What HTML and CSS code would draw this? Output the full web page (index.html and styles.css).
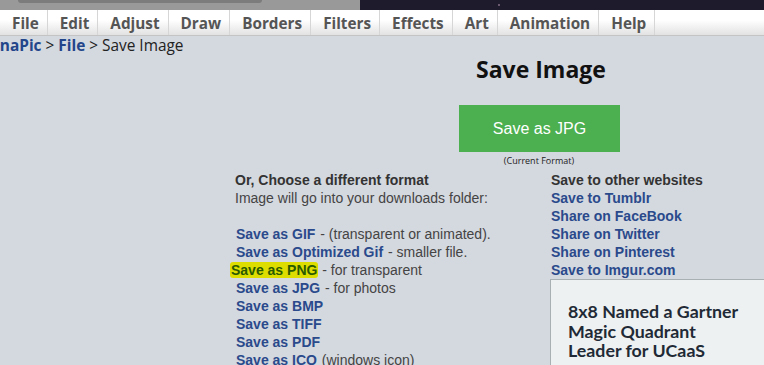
FILE: index.html
```html
<!DOCTYPE html>
<html>
<head>
<meta charset="utf-8">
<link rel="stylesheet" href="styles.css">
</head>
<body>
<div class="topstrip">
  <div class="tabzone"><div class="tabbar"></div></div>
  <div class="darkzone"><span class="dot"></span></div>
</div>
<nav class="menubar">
  <span class="mi">File</span><span class="mi">Edit</span><span class="mi">Adjust</span><span class="mi">Draw</span><span class="mi">Borders</span><span class="mi">Filters</span><span class="mi">Effects</span><span class="mi">Art</span><span class="mi">Animation</span><span class="mi">Help</span>
</nav>
<div class="crumbs"><a class="cl">LunaPic</a> &gt; <a class="cl">File</a> &gt; Save Image</div>
<main class="content">
  <h1 class="title">Save Image</h1>
  <div class="btnwrap"><span class="btn">Save as JPG</span></div>
  <div class="cur">(Current Format)</div>
  <div class="cols">
    <div class="col1">
      <div class="hd">Or, Choose a different format</div>
      <div class="tx">Image will go into your downloads folder:</div>
      <div class="gap"></div>
      <div class="ln"><a class="lk">Save as GIF</a> - (transparent or animated).</div>
      <div class="ln"><a class="lk">Save as Optimized Gif</a> - smaller file.</div>
      <div class="ln"><a class="lk hl">Save as PNG</a> - for transparent</div>
      <div class="ln"><a class="lk">Save as JPG</a> - for photos</div>
      <div class="ln"><a class="lk">Save as BMP</a></div>
      <div class="ln"><a class="lk">Save as TIFF</a></div>
      <div class="ln"><a class="lk">Save as PDF</a></div>
      <div class="ln"><a class="lk">Save as ICO</a> (windows icon)</div>
    </div>
    <div class="col2">
      <div class="hd">Save to other websites</div>
      <div class="ln"><a class="lk">Save to Tumblr</a></div>
      <div class="ln"><a class="lk">Share on FaceBook</a></div>
      <div class="ln"><a class="lk">Share on Twitter</a></div>
      <div class="ln"><a class="lk">Share on Pinterest</a></div>
      <div class="ln"><a class="lk">Save to Imgur.com</a></div>
      <div class="ad">
        <div class="adtext">8x8 Named a Gartner Magic Quadrant Leader for UCaaS</div>
      </div>
    </div>
  </div>
</main>
</body>
</html>
```
FILE: styles.css
```css
html, body {
  margin: 0;
  padding: 0;
}
body {
  width: 764px;
  height: 365px;
  overflow: hidden;
  background: #d4d8df;
  font-family: "Liberation Sans", Arial, sans-serif;
}
.topstrip {
  display: flex;
  height: 10px;
}
.tabzone {
  width: 360px;
  background: #999999;
}
.tabbar {
  margin-left: 18px;
  width: 244px;
  height: 3px;
  background: #7c7c7c;
  border-radius: 0 0 4px 4px;
}
.darkzone {
  flex: 1;
  background: #1e1b2c;
  position: relative;
}
.dot {
  position: absolute;
  left: 138px;
  top: 4px;
  width: 2px;
  height: 2px;
  background: #6a5a70;
}
.menubar {
  display: flex;
  height: 25px;
  background: linear-gradient(#ffffff 0%, #ffffff 40%, #e2e2e2 100%);
  border-bottom: 1px solid #c4c4c4;
  font-family: "Open Sans", sans-serif;
  font-weight: 700;
  font-size: 15.3px;
  color: #555555;
}
.mi {
  display: flex;
  align-items: center;
  padding: 0 8px 0 12px;
  border-right: 1px solid #d6d6d6;
}
.crumbs {
  margin-left: -19px;
  height: 20px;
  line-height: 20px;
  font-family: "Open Sans", sans-serif;
  font-size: 15.4px;
  color: #222;
  white-space: nowrap;
}
.cl {
  color: #23458a;
  font-weight: 700;
}
.content {
  margin-left: 235px;
  width: 612px;
}
.title {
  margin: -2px 0 0 0;
  text-align: center;
  font-family: "Open Sans", sans-serif;
  font-weight: 700;
  font-size: 23px;
  line-height: 30px;
  color: #111;
}
.btnwrap {
  display: flex;
  justify-content: center;
  padding-top: 21px;
  padding-right: 3px;
}
.btn {
  display: flex;
  align-items: center;
  justify-content: center;
  width: 161px;
  height: 47px;
  background: #4caf50;
  color: #fff;
  font-size: 16px;
}
.cur {
  text-align: center;
  font-family: "Open Sans", sans-serif;
  font-size: 9px;
  line-height: 18px;
  color: #222;
  padding-right: 4px;
}
.cols {
  display: grid;
  grid-template-columns: 316px 1fr;
  margin-top: 1px;
  font-size: 14px;
  line-height: 18px;
}
.hd {
  font-weight: 700;
  color: #333;
}
.tx, .ln {
  color: #444;
}
.gap {
  height: 18px;
}
.lk {
  color: #2a4a8c;
  font-weight: 700;
}
.col1 .lk {
  padding: 0 1px;
}
.hl {
  background: #dddd00;
  color: #2a5a00;
  border-radius: 3px;
  padding: 0 4px 0 6px;
  margin-left: -5px;
}
.ad {
  margin-top: 0;
  margin-left: -1px;
  height: 200px;
  background: #edf1f1;
  border: 1px solid #a9b0b4;
  border-right: none;
  padding: 22px 16px 0 17px;
}
.adtext {
  font-family: "Lato", sans-serif;
  font-weight: 700;
  font-size: 17.8px;
  line-height: 19.5px;
  color: #1f2a36;
  width: 180px;
}
```
